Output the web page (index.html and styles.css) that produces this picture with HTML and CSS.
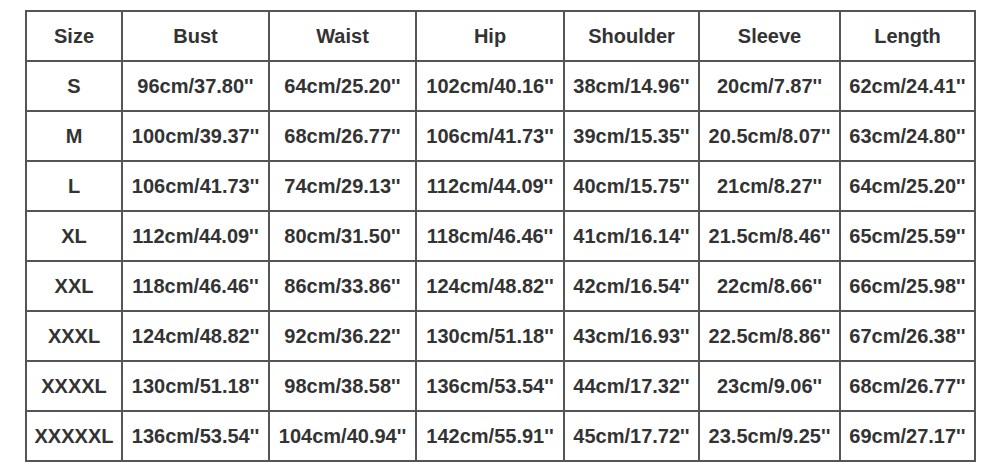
FILE: index.html
```html
<!DOCTYPE html>
<html>
<head>
<meta charset="utf-8">
<link rel="stylesheet" href="styles.css">
</head>
<body>
<table class="size-table">
  <colgroup>
    <col class="c-size"><col class="c-bust"><col class="c-waist"><col class="c-hip"><col class="c-shoulder"><col class="c-sleeve"><col class="c-length">
  </colgroup>
  <thead>
    <tr><th>Size</th><th>Bust</th><th>Waist</th><th>Hip</th><th>Shoulder</th><th>Sleeve</th><th>Length</th></tr>
  </thead>
  <tbody>
    <tr><td>S</td><td>96cm/37.80''</td><td>64cm/25.20''</td><td>102cm/40.16''</td><td>38cm/14.96''</td><td>20cm/7.87''</td><td>62cm/24.41''</td></tr>
    <tr><td>M</td><td>100cm/39.37''</td><td>68cm/26.77''</td><td>106cm/41.73''</td><td>39cm/15.35''</td><td>20.5cm/8.07''</td><td>63cm/24.80''</td></tr>
    <tr><td>L</td><td>106cm/41.73''</td><td>74cm/29.13''</td><td>112cm/44.09''</td><td>40cm/15.75''</td><td>21cm/8.27''</td><td>64cm/25.20''</td></tr>
    <tr><td>XL</td><td>112cm/44.09''</td><td>80cm/31.50''</td><td>118cm/46.46''</td><td>41cm/16.14''</td><td>21.5cm/8.46''</td><td>65cm/25.59''</td></tr>
    <tr><td>XXL</td><td>118cm/46.46''</td><td>86cm/33.86''</td><td>124cm/48.82''</td><td>42cm/16.54''</td><td>22cm/8.66''</td><td>66cm/25.98''</td></tr>
    <tr><td>XXXL</td><td>124cm/48.82''</td><td>92cm/36.22''</td><td>130cm/51.18''</td><td>43cm/16.93''</td><td>22.5cm/8.86''</td><td>67cm/26.38''</td></tr>
    <tr><td>XXXXL</td><td>130cm/51.18''</td><td>98cm/38.58''</td><td>136cm/53.54''</td><td>44cm/17.32''</td><td>23cm/9.06''</td><td>68cm/26.77''</td></tr>
    <tr><td>XXXXXL</td><td>136cm/53.54''</td><td>104cm/40.94''</td><td>142cm/55.91''</td><td>45cm/17.72''</td><td>23.5cm/9.25''</td><td>69cm/27.17''</td></tr>
  </tbody>
</table>
</body>
</html>
```
FILE: styles.css
```css
html, body {
  margin: 0;
  padding: 0;
  background: #ffffff;
}
body {
  padding: 10px 0 0 25px;
}
.size-table {
  border-collapse: collapse;
  table-layout: fixed;
  width: 949px;
  font-family: "Liberation Sans", Arial, sans-serif;
  font-weight: bold;
  font-size: 20px;
  color: #333333;
}
.size-table th,
.size-table td {
  border: 2px solid #555555;
  height: 48px;
  padding: 0;
  text-align: center;
  vertical-align: middle;
  white-space: nowrap;
  font-weight: bold;
}
.c-size { width: 96px; }
.c-bust { width: 147px; }
.c-waist { width: 147px; }
.c-hip { width: 148px; }
.c-shoulder { width: 135px; }
.c-sleeve { width: 141px; }
.c-length { width: 135px; }
```
